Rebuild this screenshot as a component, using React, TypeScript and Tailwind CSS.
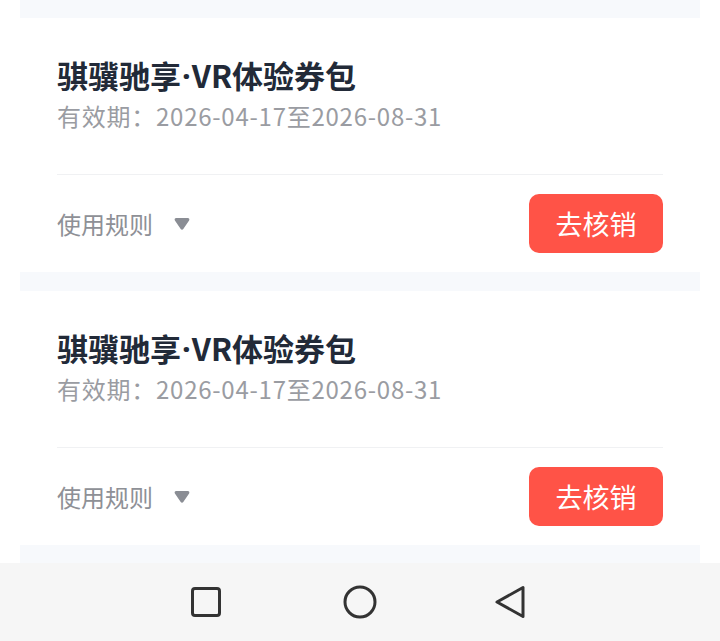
const coupons = [
  { title: ['骐骥驰享', 'VR体验券包'], start: '2026-04-17', end: '2026-08-31' },
  { title: ['骐骥驰享', 'VR体验券包'], start: '2026-04-17', end: '2026-08-31' },
];

function CouponCard({ title, start, end }: { title: string[]; start: string; end: string }) {
  return (
    <div className="bg-white px-[37px] pt-[37px] pb-[19px]">
      <h3 className="h-[40px] text-[31px] leading-[40px] font-bold text-[#222a38]">
        {title[0]}
        <span className="font-['Noto_Sans'] mx-[1px] align-top">·</span>
        {title[1]}
      </h3>
      <p className="mt-[4px] text-[24px] leading-[34px] tracking-[0.75px] text-[#9a9ca2]">
        有效期：{start}至{end}
      </p>
      <div className="mt-[41px] h-px bg-[#f0f1f3]" />
      <div className="pt-[19px] flex items-center justify-between">
        <div className="flex items-center gap-[21px]">
          <span className="text-[24px] leading-[34px] text-[#8e9096]">使用规则</span>
          <svg width="16" height="14" viewBox="0 0 16 14" fill="#8a8d94">
            <path d="M2.2 1h11.6c1.3 0 2 1.4 1.3 2.4l-5.8 8.6c-.6.9-2 .9-2.6 0L.9 3.4C.2 2.4.9 1 2.2 1z" />
          </svg>
        </div>
        <button className="w-[134px] h-[59px] rounded-[10px] bg-[#ff5347] text-white text-[27px] leading-none">
          去核销
        </button>
      </div>
    </div>
  );
}

export default function App() {
  return (
    <div
      className="h-screen flex flex-col bg-white"
      style={{ fontFamily: '"Noto Sans CJK SC", "Noto Sans", sans-serif' }}
    >
      {/* Coupon list */}
      <div className="flex-1 overflow-hidden px-[20px]">
        <div className="h-[18px] bg-[#f7f9fc]" />
        <CouponCard {...coupons[0]} />
        <div className="h-[19px] bg-[#f7f9fc]" />
        <CouponCard {...coupons[1]} />
        <div className="h-[18px] bg-[#f7f9fc]" />
      </div>

      {/* System nav bar */}
      <div className="h-[78px] shrink-0 bg-[#f6f6f6] flex items-center pl-[190px]">
        <svg width="32" height="32" viewBox="0 0 32 32" fill="none" stroke="#333" strokeWidth="3">
          <rect x="2.5" y="2.5" width="27" height="27" rx="2.5" />
        </svg>
        <svg className="ml-[121px]" width="34" height="34" viewBox="0 0 34 34" fill="none" stroke="#333" strokeWidth="3">
          <circle cx="17" cy="17" r="15" />
        </svg>
        <svg className="ml-[117px]" width="32" height="34" viewBox="0 0 32 34" fill="none" stroke="#333" strokeWidth="3" strokeLinejoin="round">
          <path d="M3 17L29 2.5v29z" />
        </svg>
      </div>
    </div>
  );
}
